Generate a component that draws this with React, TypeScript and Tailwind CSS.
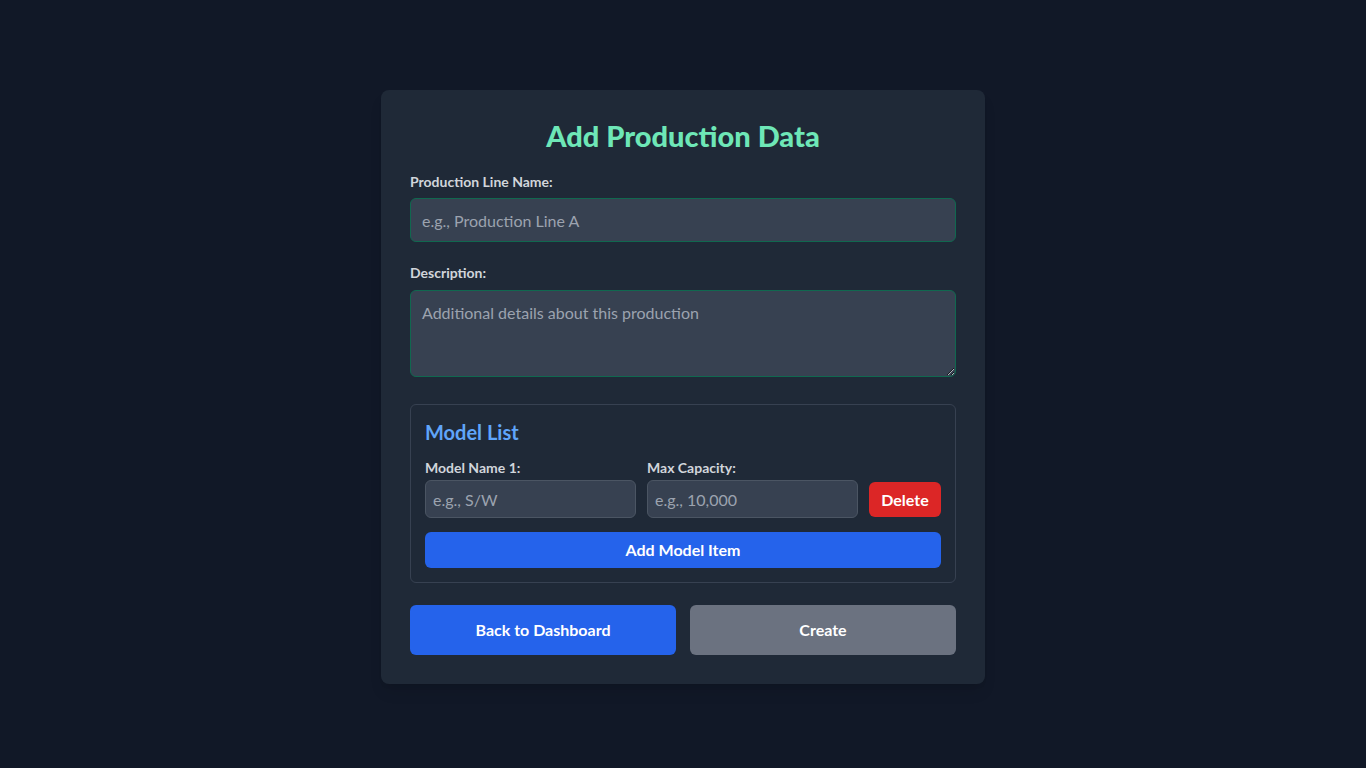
import { useState } from "react";

interface ModelItem {
  name: string;
  capacity: string;
}

// 入力欄の共通スタイル
const fieldClass =
  "w-full rounded-md border border-[#10684f] bg-[#374151] px-[11px] text-base text-gray-100 placeholder:text-[#9ca3af] focus:outline-none";

const smallField =
  "h-[38px] w-full rounded-md border border-[#4b5563] bg-[#374151] px-[7px] text-base text-gray-100 placeholder:text-[#9ca3af] focus:outline-none";

export default function App() {
  const [lineName, setLineName] = useState("");
  const [description, setDescription] = useState("");
  const [models, setModels] = useState<ModelItem[]>([{ name: "", capacity: "" }]);

  const updateModel = (i: number, key: keyof ModelItem, value: string) => {
    setModels((prev) => prev.map((m, idx) => (idx === i ? { ...m, [key]: value } : m)));
  };

  return (
    <div
      className="flex min-h-screen justify-center bg-[#111827] pt-[90px]"
      style={{ fontFamily: "Lato, 'Open Sans', sans-serif" }}
    >
      <div className="h-fit w-[604px] rounded-lg bg-[#1f2937] px-[29px] pb-[29px] pt-7 shadow-lg">
        <h1 className="mb-[18px] text-center text-[29px] leading-9 font-black text-[#6ee7b7]">
          Add Production Data
        </h1>

        <label className="mb-[6px] block text-sm leading-5 font-bold text-[#d1d5db]">
          Production Line Name:
        </label>
        <input
          value={lineName}
          onChange={(e) => setLineName(e.target.value)}
          placeholder="e.g., Production Line A"
          className={`${fieldClass} mb-[21px] h-[44px]`}
        />

        <label className="mb-[7px] block text-sm leading-5 font-bold text-[#d1d5db]">
          Description:
        </label>
        <textarea
          value={description}
          onChange={(e) => setDescription(e.target.value)}
          placeholder="Additional details about this production"
          className={`${fieldClass} mb-[27px] block h-[87px] py-[10px] leading-6`}
        />

        <div className="mb-[22px] rounded-md border border-[#374151] px-[14px] pb-[14px] pt-[13px]">
          <h2 className="mb-3 text-xl leading-7 font-bold text-[#60a5fa]">Model List</h2>

          {models.map((m, i) => (
            <div key={i} className="mb-[14px] flex items-end gap-[11px]">
              <div className="flex-1">
                <label className="mb-[2px] block text-sm leading-5 font-bold text-[#d1d5db]">
                  Model Name {i + 1}:
                </label>
                <input
                  value={m.name}
                  onChange={(e) => updateModel(i, "name", e.target.value)}
                  placeholder="e.g., S/W"
                  className={smallField}
                />
              </div>
              <div className="flex-1">
                <label className="mb-[2px] block text-sm leading-5 font-bold text-[#d1d5db]">
                  Max Capacity:
                </label>
                <input
                  value={m.capacity}
                  onChange={(e) => updateModel(i, "capacity", e.target.value)}
                  placeholder="e.g., 10,000"
                  className={smallField}
                />
              </div>
              <button
                type="button"
                onClick={() => setModels((prev) => prev.filter((_, idx) => idx !== i))}
                className="mb-px h-[35px] w-[72px] rounded-md bg-[#dc2626] text-base font-bold text-white"
              >
                Delete
              </button>
            </div>
          ))}

          <button
            type="button"
            onClick={() => setModels((prev) => [...prev, { name: "", capacity: "" }])}
            className="h-9 w-full rounded-md bg-[#2563eb] text-base font-bold text-white"
          >
            Add Model Item
          </button>
        </div>

        <div className="flex gap-[14px]">
          <button type="button" className="h-[50px] flex-1 rounded-md bg-[#2563eb] text-base font-bold text-white">
            Back to Dashboard
          </button>
          <button type="button" className="h-[50px] flex-1 rounded-md bg-[#6b7280] text-base font-bold text-white">
            Create
          </button>
        </div>
      </div>
    </div>
  );
}
